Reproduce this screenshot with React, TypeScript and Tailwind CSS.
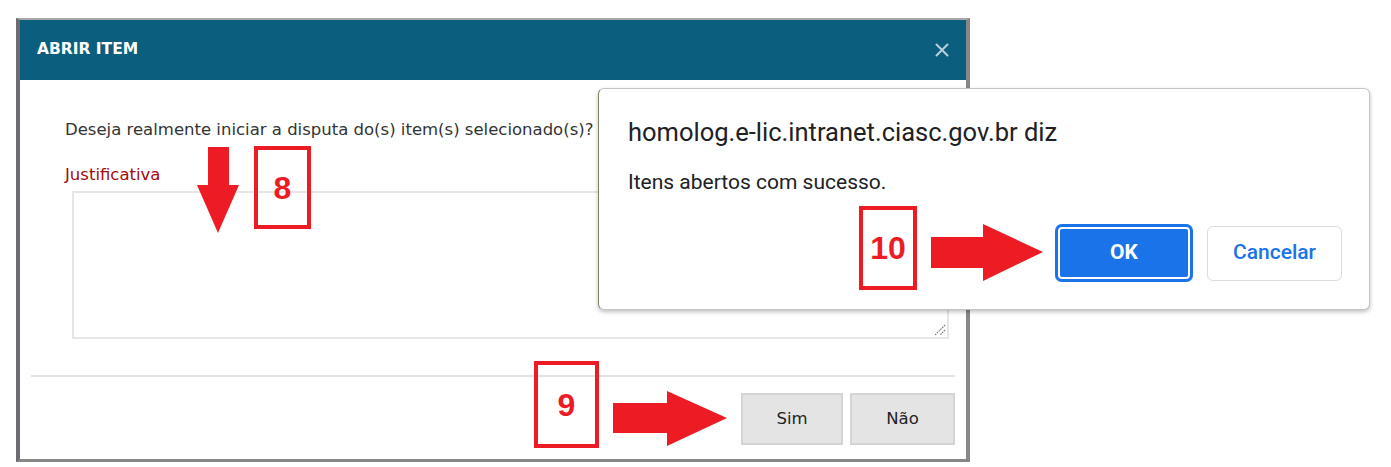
import React from 'react';

const RED = '#ed1c24';

const NumberBox: React.FC<{ label: string; className: string }> = ({ label, className }) => (
  <div
    className={`absolute flex items-center justify-center border-[4px] border-[#ed1c24] text-[#ed1c24] font-['Liberation_Sans',sans-serif] font-bold text-[32px] leading-none ${className}`}
  >
    {label}
  </div>
);

export default function App() {
  return (
    <div className="relative w-[1391px] h-[467px] overflow-hidden bg-white">
      {/* Modal: Abrir item */}
      <div className="ml-[16px] mt-[18px] w-[954px] h-[444px] flex flex-col border-solid border-l-[4px] border-r-[4px] border-t-2 border-b-[3px] border-[#878787] border-t-[#a8a8a8] border-l-[#6c6c72] bg-white font-['DejaVu_Sans',sans-serif]">
        {/* Header */}
        <div className="h-[60px] bg-[#0b5e7e] flex items-center justify-between pl-[17px] pr-[17px] shrink-0">
          <span className="text-white font-bold text-[15.5px]">ABRIR ITEM</span>
          <svg width="14" height="14" viewBox="0 0 14 14">
            <path d="M1.5 1.5 L12.5 12.5 M12.5 1.5 L1.5 12.5" stroke="#b9d0da" strokeWidth="2" strokeLinecap="round" />
          </svg>
        </div>

        {/* Body */}
        <div className="flex flex-col flex-1">
          <p className="mt-[40px] ml-[45px] text-[16.5px] leading-[20px] text-[#333]">
            Deseja realmente iniciar a disputa do(s) item(s) selecionado(s)?
          </p>
          <label className="mt-[25px] ml-[45px] text-[16.5px] leading-[20px] text-[#a30b0b]">Justificativa</label>
          <div className="relative mt-[6px] ml-[52px] w-[877px] h-[148px] border-2 border-[#e6e6e6] bg-white">
            <svg className="absolute right-[1px] bottom-[1px]" width="14" height="14" viewBox="0 0 14 14">
              <path d="M13 3 L3 13 M13 8 L8 13" stroke="#777" strokeWidth="1.2" strokeDasharray="1.5 1" />
            </svg>
          </div>
          <div className="mt-[36px] ml-[11px] w-[924px] border-t-2 border-[#e3e3e3]" />
          <div className="mt-[16px] ml-[721px] flex gap-[7px]">
            <button className="w-[102px] h-[52px] bg-[#e4e4e4] border-2 border-[#d4d4d4] text-[16.5px] text-[#222]">Sim</button>
            <button className="w-[105px] h-[52px] bg-[#e4e4e4] border-2 border-[#d4d4d4] text-[16.5px] text-[#222]">Não</button>
          </div>
        </div>
      </div>

      {/* Browser alert */}
      <div className="absolute left-[598px] top-[88px] w-[772px] h-[222px] rounded-[6px] border border-[#c4c4c4] border-l-[#7d8462] bg-white shadow-[0_2px_4px_rgba(0,0,0,0.25)] flex flex-col font-['Roboto',sans-serif]">
        <div className="mt-[28px] ml-[29px] text-[25.5px] leading-[30px] text-[#202124]">
          homolog.e-lic.intranet.ciasc.gov.br diz
        </div>
        <div className="mt-[22px] ml-[29px] text-[21px] leading-[26px] text-[#202124]">Itens abertos com sucesso.</div>
        <div className="mt-[29px] mr-[27px] flex justify-end items-center gap-[14px]">
          <button className="w-[138px] h-[58px] rounded-[7px] bg-[#1a73e8] shadow-[inset_0_0_0_3px_#1a73e8,inset_0_0_0_5px_#ffffff] text-white font-bold text-[21px]">
            OK
          </button>
          <button className="w-[135px] h-[55px] rounded-[6px] border border-[#dadce0] bg-white text-[#1a73e8] font-medium text-[21px]">
            Cancelar
          </button>
        </div>
      </div>

      {/* Annotations */}
      <svg className="absolute left-[195px] top-[145px]" width="46" height="90" viewBox="0 0 46 90">
        <polygon points="13,2 34,2 34,40 44,40 23,88 2,40 13,40" fill={RED} strokeLinejoin="round" />
      </svg>
      <NumberBox label="8" className="left-[254px] top-[146px] w-[57px] h-[83px]" />

      <NumberBox label="9" className="left-[534px] top-[361px] w-[65px] h-[87px]" />
      <svg className="absolute left-[611px] top-[389px]" width="118" height="59" viewBox="0 0 118 59">
        <polygon points="2,14 56,14 56,2 116,29 56,57 56,44 2,44" fill={RED} />
      </svg>

      <NumberBox label="10" className="left-[859px] top-[206px] w-[58px] h-[84px]" />
      <svg className="absolute left-[929px] top-[222px]" width="116" height="61" viewBox="0 0 116 61">
        <polygon points="2,15 54,15 54,2 114,30 54,59 54,46 2,46" fill={RED} />
      </svg>
    </div>
  );
}
